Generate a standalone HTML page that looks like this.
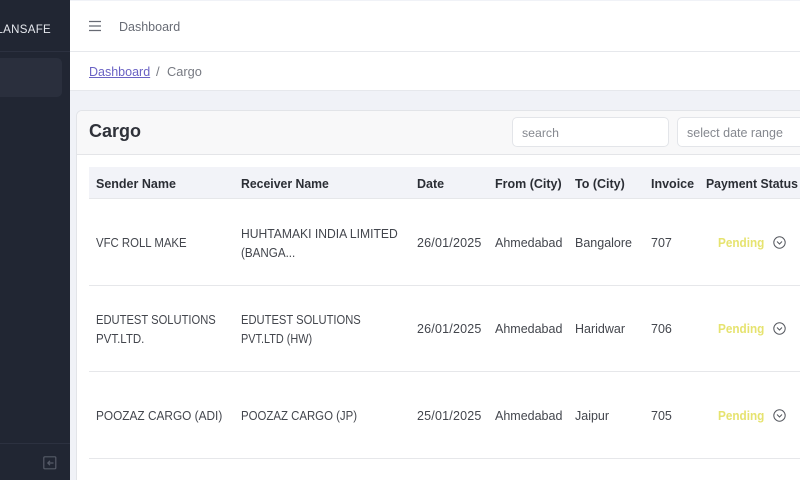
<!DOCTYPE html>
<html><head><meta charset="utf-8">
<style>
html,body{margin:0;padding:0;width:800px;height:480px;overflow:hidden;background:#f0f2f7;}
body{font-family:"Liberation Sans",sans-serif;position:relative;color:#3a3d45;filter:blur(.3px);}
.a{position:absolute;white-space:nowrap;line-height:18px;transform-origin:0 50%;}
.b{position:absolute;}
.h{font-weight:bold;font-size:12.5px;color:#2b2e35;top:175px;}
.t{font-size:12.5px;color:#43464d;}
.p{font-size:12.5px;color:#e6e36f;font-weight:bold;transform:scaleX(.94);}
</style></head>
<body>
<div class="b" style="left:0;top:0;width:70px;height:480px;background:#212633;"></div>
<div class="b" style="left:0;top:51px;width:70px;height:1px;background:#2c3140;"></div>
<div class="b" style="left:0;top:443px;width:70px;height:1px;background:#2c3140;"></div>
<div class="b" style="left:-10px;top:58px;width:72px;height:39px;background:#2a2f3d;border-radius:5px;"></div>
<div class="a" style="right:749px;top:21px;font-size:11.5px;letter-spacing:.3px;color:#e6e8ee;">LANSAFE</div>
<svg class="b" style="left:43px;top:456px" width="14" height="14" viewBox="0 0 14 14" fill="none" stroke="#565b68" stroke-width="1.2"><rect x=".8" y=".8" width="12" height="12" rx="1"/><path d="M10.5 7H5M7 4.8 4.8 7 7 9.2"/></svg>

<div class="b" style="left:70px;top:1px;width:730px;height:50px;background:#fff;border-bottom:1px solid #e6e8ec;"></div>
<svg class="b" style="left:89px;top:20px" width="12" height="12" viewBox="0 0 12 12" stroke="#666a73" stroke-width="1.3"><path d="M0 1.5H12M0 6H12M0 10.5H12"/></svg>
<div class="a" style="left:119px;top:18px;font-size:12.5px;color:#686c75;">Dashboard</div>

<div class="b" style="left:70px;top:52px;width:730px;height:38px;background:#fff;border-bottom:1px solid #e6e8ec;"></div>
<div class="a" style="left:89px;top:63px;font-size:12.5px;color:#6a62c4;text-decoration:underline;">Dashboard</div>
<div class="a" style="left:156px;top:63px;font-size:13px;color:#777a82;">/</div>
<div class="a" style="left:167px;top:63px;font-size:12.8px;color:#777a82;">Cargo</div>

<div class="b" style="left:76px;top:110px;width:730px;height:380px;background:#fff;border:1px solid #e2e4e8;border-radius:6px;box-sizing:border-box;"></div>
<div class="b" style="left:77px;top:111px;width:723px;height:43px;background:#f8f8f9;border-bottom:1px solid #e4e5e8;border-radius:5px 0 0 0;"></div>
<div class="a" style="left:89px;top:120px;font-size:18px;line-height:22px;font-weight:bold;color:#2f323a;">Cargo</div>
<div class="b" style="left:512px;top:117px;width:157px;height:30px;background:#fff;border:1px solid #e3e5e9;border-radius:5px;box-sizing:border-box;"></div>
<div class="a" style="left:522px;top:124px;font-size:12.3px;color:#85888f;">search</div>
<div class="b" style="left:677px;top:117px;width:140px;height:30px;background:#fff;border:1px solid #e3e5e9;border-radius:5px;box-sizing:border-box;"></div>
<div class="a" style="left:687px;top:124px;font-size:12.5px;color:#85888f;">select date range</div>

<div class="b" style="left:89px;top:167px;width:711px;height:32px;background:#f2f3f8;border-bottom:1px solid #e6e7ea;box-sizing:border-box;"></div>
<div class="a h" style="left:96px;">Sender Name</div>
<div class="a h" style="left:241px;transform:scaleX(.98);">Receiver Name</div>
<div class="a h" style="left:417px;">Date</div>
<div class="a h" style="left:495px;">From (City)</div>
<div class="a h" style="left:575px;">To (City)</div>
<div class="a h" style="left:651px;">Invoice</div>
<div class="a h" style="left:706px;transform:scaleX(.98);">Payment Status</div>

<div class="a t" style="left:96px;top:234px;transform:scaleX(.91);">VFC ROLL MAKE</div>
<div class="a t" style="left:241px;top:225px;transform:scaleX(.97);">HUHTAMAKI INDIA LIMITED</div>
<div class="a t" style="left:241px;top:244px;transform:scaleX(.93);">(BANGA...</div>
<div class="a t" style="left:417px;top:234px;letter-spacing:.2px;">26/01/2025</div>
<div class="a t" style="left:495px;top:234px;">Ahmedabad</div>
<div class="a t" style="left:575px;top:234px;">Bangalore</div>
<div class="a t" style="left:651px;top:234px;">707</div>
<div class="a p" style="left:718px;top:234px;">Pending</div>
<svg class="b" style="left:773px;top:236px" width="13" height="13" viewBox="0 0 13 13" fill="none" stroke="#55585f" stroke-width="1"><circle cx="6.5" cy="6.5" r="5.7"/><path d="M4 5.5 6.5 8 9 5.5"/></svg>
<div class="b" style="left:89px;top:285px;width:711px;height:1px;background:#e6e7ea;"></div>

<div class="a t" style="left:96px;top:311px;transform:scaleX(.895);">EDUTEST SOLUTIONS</div>
<div class="a t" style="left:96px;top:330px;transform:scaleX(.92);">PVT.LTD.</div>
<div class="a t" style="left:241px;top:311px;transform:scaleX(.895);">EDUTEST SOLUTIONS</div>
<div class="a t" style="left:241px;top:330px;transform:scaleX(.87);">PVT.LTD (HW)</div>
<div class="a t" style="left:417px;top:320px;letter-spacing:.2px;">26/01/2025</div>
<div class="a t" style="left:495px;top:320px;">Ahmedabad</div>
<div class="a t" style="left:575px;top:320px;">Haridwar</div>
<div class="a t" style="left:651px;top:320px;">706</div>
<div class="a p" style="left:718px;top:320px;">Pending</div>
<svg class="b" style="left:773px;top:322px" width="13" height="13" viewBox="0 0 13 13" fill="none" stroke="#55585f" stroke-width="1"><circle cx="6.5" cy="6.5" r="5.7"/><path d="M4 5.5 6.5 8 9 5.5"/></svg>
<div class="b" style="left:89px;top:371px;width:711px;height:1px;background:#e6e7ea;"></div>

<div class="a t" style="left:96px;top:407px;transform:scaleX(.947);">POOZAZ CARGO (ADI)</div>
<div class="a t" style="left:241px;top:407px;transform:scaleX(.913);">POOZAZ CARGO (JP)</div>
<div class="a t" style="left:417px;top:407px;letter-spacing:.2px;">25/01/2025</div>
<div class="a t" style="left:495px;top:407px;">Ahmedabad</div>
<div class="a t" style="left:575px;top:407px;">Jaipur</div>
<div class="a t" style="left:651px;top:407px;">705</div>
<div class="a p" style="left:718px;top:407px;">Pending</div>
<svg class="b" style="left:773px;top:409px" width="13" height="13" viewBox="0 0 13 13" fill="none" stroke="#55585f" stroke-width="1"><circle cx="6.5" cy="6.5" r="5.7"/><path d="M4 5.5 6.5 8 9 5.5"/></svg>
<div class="b" style="left:89px;top:458px;width:711px;height:1px;background:#e6e7ea;"></div>
</body></html>
